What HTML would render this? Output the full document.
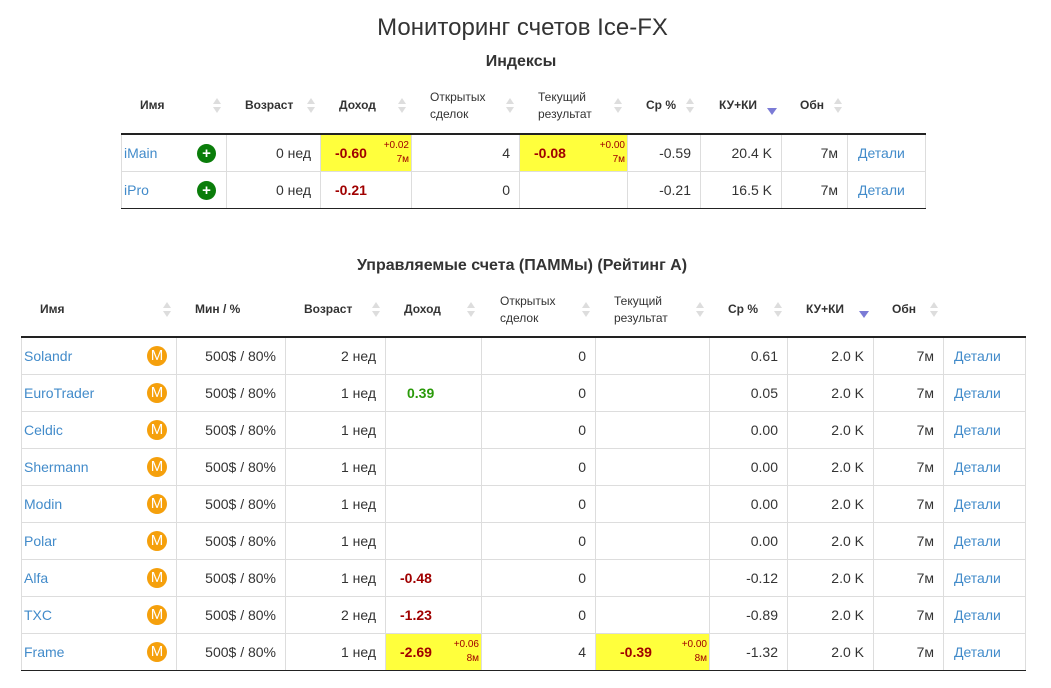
<!DOCTYPE html>
<html><head><meta charset="utf-8"><style>
*{margin:0;padding:0;box-sizing:border-box}
body{width:1051px;height:688px;background:#fff;font-family:"Liberation Sans",Arial,sans-serif;color:#333;position:relative;overflow:hidden}
h1{position:absolute;left:0;width:1045px;text-align:center;top:14px;font-size:24px;font-weight:normal;color:#333}
h2{position:absolute;text-align:center;font-size:16px;font-weight:bold;color:#333}
.h{position:absolute;font-size:12px;font-weight:bold;color:#333;line-height:17px}
.s{position:absolute;width:8px;height:16px}
.s:before{content:"";position:absolute;left:0;top:0;border-left:4px solid transparent;border-right:4px solid transparent;border-bottom:6px solid #ddd}
.s:after{content:"";position:absolute;left:0;top:9px;border-left:4px solid transparent;border-right:4px solid transparent;border-top:6px solid #ddd}
.d{position:absolute;border-left:5px solid transparent;border-right:5px solid transparent;border-top:7px solid #7b7bd6}
table{position:absolute;border-collapse:collapse;table-layout:fixed;font-size:14px}
td{border:1px solid #ddd;height:37px;padding:0 9px;text-align:right;position:relative;white-space:nowrap}
tr:first-child td{border-top:2px solid #222}
tr:last-child td{border-bottom:1px solid #222}
td.n{text-align:left;padding-left:2px}
a{color:#428bca;text-decoration:none}
td.dl{text-align:left;padding-left:10px}
.pl{position:absolute;right:10px;top:9px;width:19px;height:19px;border-radius:50%;background:#0a7d0a;color:#fff;font-weight:bold;font-size:15px;line-height:19px;text-align:center}
.m{position:absolute;right:9px;top:8px;width:20px;height:20px;border-radius:50%;background:#f5a00c;color:#fff;font-size:15px;line-height:20px;text-align:center}
.y{background:#ffff3c}
.r{color:#a00000;font-weight:bold;text-align:left;padding-left:14px}
.g{color:#2a9a0a;font-weight:bold;text-align:left;padding-left:21px}
.sup{position:absolute;right:2px;top:4px;font-size:10px;color:#a00000;text-align:right;line-height:14px;font-weight:normal}
</style></head><body>
<h1>Мониторинг счетов Ice-FX</h1>
<h2 style="left:421px;width:200px;top:53px">Индексы</h2>

<div class="h" style="left:140px;top:97px">Имя</div><div class="s" style="left:213px;top:98px"></div>
<div class="h" style="left:245px;top:97px">Возраст</div><div class="s" style="left:307px;top:98px"></div>
<div class="h" style="left:339px;top:97px">Доход</div><div class="s" style="left:398px;top:98px"></div>
<div class="h" style="left:430px;top:89px;font-weight:normal">Открытых<br>сделок</div><div class="s" style="left:506px;top:98px"></div>
<div class="h" style="left:538px;top:89px;font-weight:normal">Текущий<br>результат</div><div class="s" style="left:614px;top:98px"></div>
<div class="h" style="left:646px;top:97px">Ср %</div><div class="s" style="left:686px;top:98px"></div>
<div class="h" style="left:719px;top:97px">КУ+КИ</div><div class="d" style="left:767px;top:108px"></div>
<div class="h" style="left:800px;top:97px">Обн</div><div class="s" style="left:834px;top:98px"></div>

<table style="left:121px;top:133px;width:804px">
<colgroup><col style="width:105px"><col style="width:94px"><col style="width:91px"><col style="width:108px"><col style="width:108px"><col style="width:73px"><col style="width:81px"><col style="width:66px"><col style="width:78px"></colgroup>
<tr><td class="n"><a>iMain</a><span class="pl">+</span></td><td>0 нед</td><td class="y r">-0.60<span class="sup">+0.02<br>7м</span></td><td>4</td><td class="y r">-0.08<span class="sup">+0.00<br>7м</span></td><td>-0.59</td><td>20.4 K</td><td>7м</td><td class="dl"><a>Детали</a></td></tr>
<tr><td class="n"><a>iPro</a><span class="pl">+</span></td><td>0 нед</td><td class="r">-0.21</td><td>0</td><td></td><td>-0.21</td><td>16.5 K</td><td>7м</td><td class="dl"><a>Детали</a></td></tr>
</table>

<h2 style="left:322px;width:400px;top:257px">Управляемые счета (ПАММы) (Рейтинг A)</h2>

<div class="h" style="left:40px;top:301px">Имя</div><div class="s" style="left:163px;top:302px"></div>
<div class="h" style="left:195px;top:301px">Мин / %</div>
<div class="h" style="left:304px;top:301px">Возраст</div><div class="s" style="left:372px;top:302px"></div>
<div class="h" style="left:404px;top:301px">Доход</div><div class="s" style="left:467px;top:302px"></div>
<div class="h" style="left:500px;top:293px;font-weight:normal">Открытых<br>сделок</div><div class="s" style="left:582px;top:302px"></div>
<div class="h" style="left:614px;top:293px;font-weight:normal">Текущий<br>результат</div><div class="s" style="left:696px;top:302px"></div>
<div class="h" style="left:728px;top:301px">Ср %</div><div class="s" style="left:774px;top:302px"></div>
<div class="h" style="left:806px;top:301px">КУ+КИ</div><div class="d" style="left:859px;top:311px"></div>
<div class="h" style="left:892px;top:301px">Обн</div><div class="s" style="left:930px;top:302px"></div>

<table style="left:21px;top:336px;width:1004px">
<colgroup><col style="width:155px"><col style="width:109px"><col style="width:100px"><col style="width:96px"><col style="width:114px"><col style="width:114px"><col style="width:78px"><col style="width:86px"><col style="width:70px"><col style="width:82px"></colgroup>
<tr><td class="n"><a>Solandr</a><span class="m">M</span></td><td>500$ / 80%</td><td>2 нед</td><td></td><td>0</td><td></td><td>0.61</td><td>2.0 K</td><td>7м</td><td class="dl"><a>Детали</a></td></tr>
<tr><td class="n"><a>EuroTrader</a><span class="m">M</span></td><td>500$ / 80%</td><td>1 нед</td><td class="g">0.39</td><td>0</td><td></td><td>0.05</td><td>2.0 K</td><td>7м</td><td class="dl"><a>Детали</a></td></tr>
<tr><td class="n"><a>Celdic</a><span class="m">M</span></td><td>500$ / 80%</td><td>1 нед</td><td></td><td>0</td><td></td><td>0.00</td><td>2.0 K</td><td>7м</td><td class="dl"><a>Детали</a></td></tr>
<tr><td class="n"><a>Shermann</a><span class="m">M</span></td><td>500$ / 80%</td><td>1 нед</td><td></td><td>0</td><td></td><td>0.00</td><td>2.0 K</td><td>7м</td><td class="dl"><a>Детали</a></td></tr>
<tr><td class="n"><a>Modin</a><span class="m">M</span></td><td>500$ / 80%</td><td>1 нед</td><td></td><td>0</td><td></td><td>0.00</td><td>2.0 K</td><td>7м</td><td class="dl"><a>Детали</a></td></tr>
<tr><td class="n"><a>Polar</a><span class="m">M</span></td><td>500$ / 80%</td><td>1 нед</td><td></td><td>0</td><td></td><td>0.00</td><td>2.0 K</td><td>7м</td><td class="dl"><a>Детали</a></td></tr>
<tr><td class="n"><a>Alfa</a><span class="m">M</span></td><td>500$ / 80%</td><td>1 нед</td><td class="r">-0.48</td><td>0</td><td></td><td>-0.12</td><td>2.0 K</td><td>7м</td><td class="dl"><a>Детали</a></td></tr>
<tr><td class="n"><a>TXC</a><span class="m">M</span></td><td>500$ / 80%</td><td>2 нед</td><td class="r">-1.23</td><td>0</td><td></td><td>-0.89</td><td>2.0 K</td><td>7м</td><td class="dl"><a>Детали</a></td></tr>
<tr><td class="n"><a>Frame</a><span class="m">M</span></td><td>500$ / 80%</td><td>1 нед</td><td class="y r">-2.69<span class="sup">+0.06<br>8м</span></td><td>4</td><td class="y r" style="padding-left:24px">-0.39<span class="sup">+0.00<br>8м</span></td><td>-1.32</td><td>2.0 K</td><td>7м</td><td class="dl"><a>Детали</a></td></tr>
</table>
</body></html>
